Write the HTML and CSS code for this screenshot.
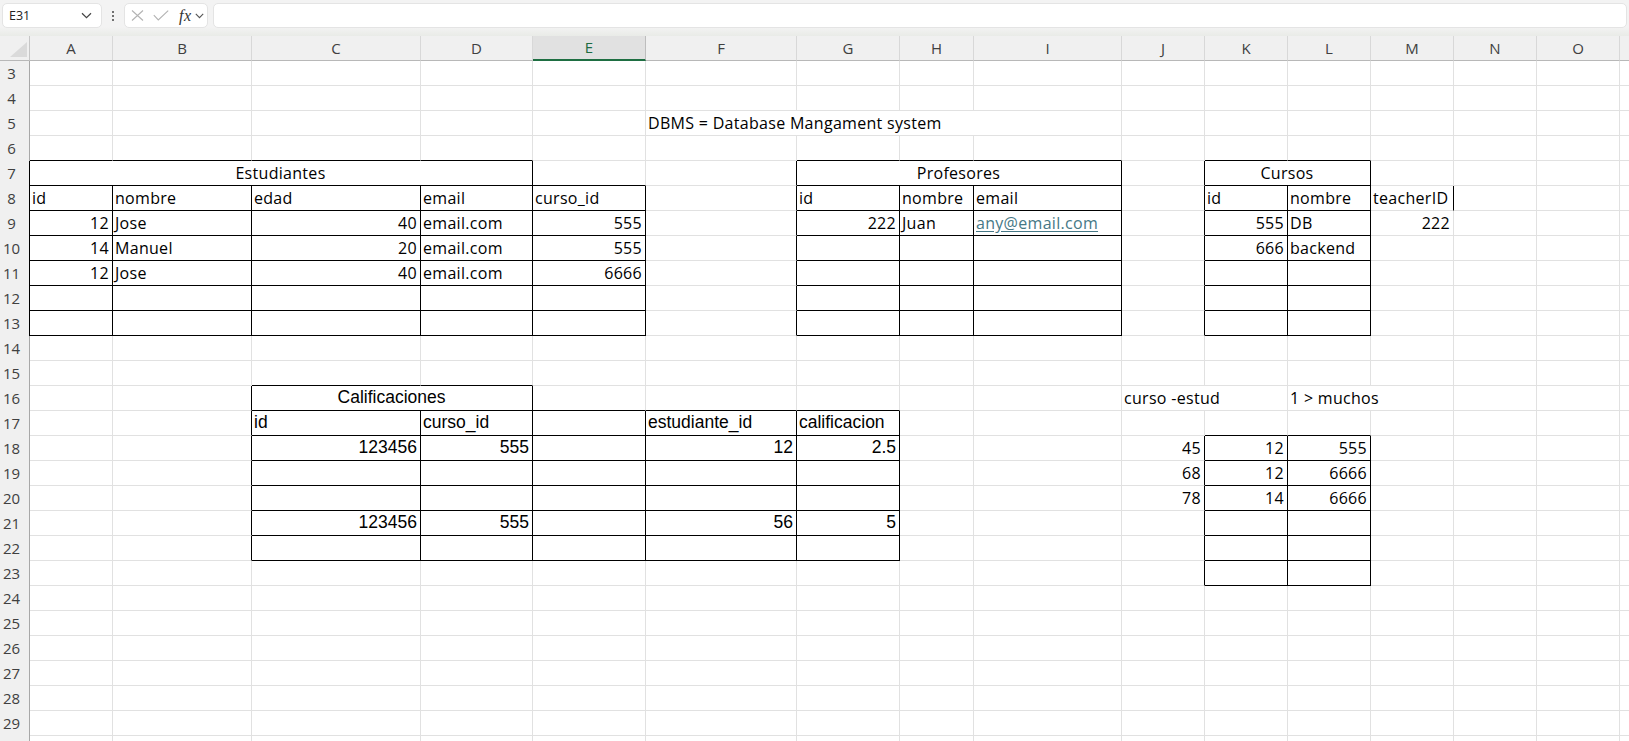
FILE: index.html
```html
<!DOCTYPE html>
<html lang="es">
<head>
<meta charset="utf-8">
<title>Excel</title>
<link rel="stylesheet" href="styles.css">
</head>
<body>
<div class="app">
  <div class="topbar">
    <div class="namebox"><span>E31</span>
      <svg class="chev" width="11" height="7" viewBox="0 0 11 7"><path d="M1 1.2 L5.5 5.6 L10 1.2" fill="none" stroke="#444" stroke-width="1.2"/></svg>
    </div>
    <div class="dots"><span></span><span></span><span></span></div>
    <div class="fxbox">
      <svg class="ico" width="13" height="11" viewBox="0 0 13 11"><path d="M1 0.5 L12 10.5 M12 0.5 L1 10.5" stroke="#b3b3b3" stroke-width="1.1" fill="none"/></svg>
      <svg class="ico" width="16" height="11" viewBox="0 0 16 11"><path d="M0.8 5.2 L5.3 10 L15.2 0.6" stroke="#b3b3b3" stroke-width="1.1" fill="none"/></svg>
      <span class="fx">fx</span>
      <svg class="chev2" width="9" height="6" viewBox="0 0 9 6"><path d="M0.8 0.8 L4.5 4.6 L8.2 0.8" fill="none" stroke="#555" stroke-width="1.1"/></svg>
    </div>
    <div class="formula"></div>
  </div>

  <div class="sheet">
    <div class="row head">
      <div class="corner"><svg width="17" height="15" viewBox="0 0 17 15"><path d="M17 0 L17 15 L0 15 Z" fill="#dadada"/></svg></div>
      <div class="h">A</div><div class="h">B</div><div class="h">C</div><div class="h">D</div>
      <div class="h sel">E</div><div class="h">F</div><div class="h">G</div><div class="h">H</div>
      <div class="h">I</div><div class="h">J</div><div class="h">K</div><div class="h">L</div>
      <div class="h">M</div><div class="h">N</div><div class="h">O</div><div class="h"></div>
    </div>

    <!-- 3 -->
    <div class="row">
      <div class="rh">3</div>
      <div class="c"></div><div class="c"></div><div class="c"></div><div class="c"></div><div class="c"></div><div class="c"></div><div class="c"></div><div class="c"></div>
      <div class="c"></div><div class="c"></div><div class="c"></div><div class="c"></div><div class="c"></div><div class="c"></div><div class="c"></div><div class="c"></div>
    </div>
    <!-- 4 -->
    <div class="row">
      <div class="rh">4</div>
      <div class="c"></div><div class="c"></div><div class="c"></div><div class="c"></div><div class="c"></div><div class="c"></div><div class="c"></div><div class="c"></div>
      <div class="c"></div><div class="c"></div><div class="c"></div><div class="c"></div><div class="c"></div><div class="c"></div><div class="c"></div><div class="c"></div>
    </div>
    <!-- 5 -->
    <div class="row">
      <div class="rh">5</div>
      <div class="c"></div><div class="c"></div><div class="c"></div><div class="c"></div><div class="c"></div>
      <div class="c s4">DBMS = Database Mangament system</div>
      <div class="c"></div><div class="c"></div><div class="c"></div><div class="c"></div><div class="c"></div><div class="c"></div><div class="c"></div>
    </div>
    <!-- 6 -->
    <div class="row">
      <div class="rh">6</div>
      <div class="c bb"></div><div class="c bb"></div><div class="c bb"></div><div class="c bb"></div><div class="c"></div><div class="c"></div>
      <div class="c bb"></div><div class="c bb"></div><div class="c bb"></div><div class="c"></div>
      <div class="c bb"></div><div class="c bb"></div>
      <div class="c"></div><div class="c"></div><div class="c"></div><div class="c"></div>
    </div>
    <!-- 7 -->
    <div class="row">
      <div class="rh bl">7</div>
      <div class="c s4 ctr br bb">Estudiantes</div>
      <div class="c bb"></div><div class="c br"></div>
      <div class="c s3 ctr br bb">Profesores</div>
      <div class="c br"></div>
      <div class="c s2 ctr br bb">Cursos</div>
      <div class="c"></div><div class="c"></div><div class="c"></div><div class="c"></div>
    </div>
    <!-- 8 -->
    <div class="row">
      <div class="rh bl">8</div>
      <div class="c br bb">id</div><div class="c br bb">nombre</div><div class="c br bb">edad</div><div class="c br bb">email</div><div class="c br bb">curso_id</div>
      <div class="c br"></div>
      <div class="c br bb">id</div><div class="c br bb">nombre</div><div class="c br bb">email</div>
      <div class="c br"></div>
      <div class="c br bb">id</div><div class="c br bb">nombre</div><div class="c br">teacherID</div>
      <div class="c"></div><div class="c"></div><div class="c"></div>
    </div>
    <!-- 9 -->
    <div class="row">
      <div class="rh bl">9</div>
      <div class="c br bb n">12</div><div class="c br bb">Jose</div><div class="c br bb n">40</div><div class="c br bb">email.com</div><div class="c br bb n">555</div>
      <div class="c br"></div>
      <div class="c br bb n">222</div><div class="c br bb">Juan</div><div class="c br bb"><span class="link">any@email.com</span></div>
      <div class="c br"></div>
      <div class="c br bb n">555</div><div class="c br bb">DB</div><div class="c n">222</div>
      <div class="c"></div><div class="c"></div><div class="c"></div>
    </div>
    <!-- 10 -->
    <div class="row">
      <div class="rh bl">10</div>
      <div class="c br bb n">14</div><div class="c br bb">Manuel</div><div class="c br bb n">20</div><div class="c br bb">email.com</div><div class="c br bb n">555</div>
      <div class="c br"></div>
      <div class="c br bb"></div><div class="c br bb"></div><div class="c br bb"></div>
      <div class="c br"></div>
      <div class="c br bb n">666</div><div class="c br bb">backend</div><div class="c"></div>
      <div class="c"></div><div class="c"></div><div class="c"></div>
    </div>
    <!-- 11 -->
    <div class="row">
      <div class="rh bl">11</div>
      <div class="c br bb n">12</div><div class="c br bb">Jose</div><div class="c br bb n">40</div><div class="c br bb">email.com</div><div class="c br bb n">6666</div>
      <div class="c br"></div>
      <div class="c br bb"></div><div class="c br bb"></div><div class="c br bb"></div>
      <div class="c br"></div>
      <div class="c br bb"></div><div class="c br bb"></div><div class="c"></div>
      <div class="c"></div><div class="c"></div><div class="c"></div>
    </div>
    <!-- 12 -->
    <div class="row">
      <div class="rh bl">12</div>
      <div class="c br bb"></div><div class="c br bb"></div><div class="c br bb"></div><div class="c br bb"></div><div class="c br bb"></div>
      <div class="c br"></div>
      <div class="c br bb"></div><div class="c br bb"></div><div class="c br bb"></div>
      <div class="c br"></div>
      <div class="c br bb"></div><div class="c br bb"></div><div class="c"></div>
      <div class="c"></div><div class="c"></div><div class="c"></div>
    </div>
    <!-- 13 -->
    <div class="row">
      <div class="rh bl">13</div>
      <div class="c br bb"></div><div class="c br bb"></div><div class="c br bb"></div><div class="c br bb"></div><div class="c br bb"></div>
      <div class="c br"></div>
      <div class="c br bb"></div><div class="c br bb"></div><div class="c br bb"></div>
      <div class="c br"></div>
      <div class="c br bb"></div><div class="c br bb"></div><div class="c"></div>
      <div class="c"></div><div class="c"></div><div class="c"></div>
    </div>
    <!-- 14 -->
    <div class="row">
      <div class="rh">14</div>
      <div class="c"></div><div class="c"></div><div class="c"></div><div class="c"></div><div class="c"></div><div class="c"></div><div class="c"></div><div class="c"></div>
      <div class="c"></div><div class="c"></div><div class="c"></div><div class="c"></div><div class="c"></div><div class="c"></div><div class="c"></div><div class="c"></div>
    </div>
    <!-- 15 -->
    <div class="row">
      <div class="rh">15</div>
      <div class="c"></div><div class="c"></div><div class="c bb"></div><div class="c bb"></div><div class="c"></div><div class="c"></div><div class="c"></div><div class="c"></div>
      <div class="c"></div><div class="c"></div><div class="c"></div><div class="c"></div><div class="c"></div><div class="c"></div><div class="c"></div><div class="c"></div>
    </div>
    <!-- 16 -->
    <div class="row">
      <div class="rh">16</div>
      <div class="c"></div><div class="c br"></div>
      <div class="c s2 ctr br bb nar">Calificaciones</div>
      <div class="c bb"></div><div class="c bb"></div><div class="c bb"></div>
      <div class="c"></div><div class="c"></div>
      <div class="c s2">curso -estud</div>
      <div class="c s2">1 &gt; muchos</div>
      <div class="c"></div><div class="c"></div><div class="c"></div>
    </div>
    <!-- 17 -->
    <div class="row">
      <div class="rh">17</div>
      <div class="c"></div><div class="c br"></div>
      <div class="c br bb nar">id</div><div class="c br bb nar">curso_id</div><div class="c br bb"></div><div class="c br bb nar">estudiante_id</div><div class="c br bb nar">calificacion</div>
      <div class="c"></div><div class="c"></div><div class="c"></div>
      <div class="c bb"></div><div class="c bb"></div>
      <div class="c"></div><div class="c"></div><div class="c"></div><div class="c"></div>
    </div>
    <!-- 18 -->
    <div class="row">
      <div class="rh">18</div>
      <div class="c"></div><div class="c br"></div>
      <div class="c br bb n nar">123456</div><div class="c br bb n nar">555</div><div class="c br bb"></div><div class="c br bb n nar">12</div><div class="c br bb n nar">2.5</div>
      <div class="c"></div><div class="c"></div>
      <div class="c br n">45</div><div class="c br bb n">12</div><div class="c br bb n">555</div>
      <div class="c"></div><div class="c"></div><div class="c"></div><div class="c"></div>
    </div>
    <!-- 19 -->
    <div class="row">
      <div class="rh">19</div>
      <div class="c"></div><div class="c br"></div>
      <div class="c br bb"></div><div class="c br bb"></div><div class="c br bb"></div><div class="c br bb"></div><div class="c br bb"></div>
      <div class="c"></div><div class="c"></div>
      <div class="c br n">68</div><div class="c br bb n">12</div><div class="c br bb n">6666</div>
      <div class="c"></div><div class="c"></div><div class="c"></div><div class="c"></div>
    </div>
    <!-- 20 -->
    <div class="row">
      <div class="rh">20</div>
      <div class="c"></div><div class="c br"></div>
      <div class="c br bb"></div><div class="c br bb"></div><div class="c br bb"></div><div class="c br bb"></div><div class="c br bb"></div>
      <div class="c"></div><div class="c"></div>
      <div class="c br n">78</div><div class="c br bb n">14</div><div class="c br bb n">6666</div>
      <div class="c"></div><div class="c"></div><div class="c"></div><div class="c"></div>
    </div>
    <!-- 21 -->
    <div class="row">
      <div class="rh">21</div>
      <div class="c"></div><div class="c br"></div>
      <div class="c br bb n nar">123456</div><div class="c br bb n nar">555</div><div class="c br bb"></div><div class="c br bb n nar">56</div><div class="c br bb n nar">5</div>
      <div class="c"></div><div class="c"></div>
      <div class="c br"></div><div class="c br bb"></div><div class="c br bb"></div>
      <div class="c"></div><div class="c"></div><div class="c"></div><div class="c"></div>
    </div>
    <!-- 22 -->
    <div class="row">
      <div class="rh">22</div>
      <div class="c"></div><div class="c br"></div>
      <div class="c br bb"></div><div class="c br bb"></div><div class="c br bb"></div><div class="c br bb"></div><div class="c br bb"></div>
      <div class="c"></div><div class="c"></div>
      <div class="c br"></div><div class="c br bb"></div><div class="c br bb"></div>
      <div class="c"></div><div class="c"></div><div class="c"></div><div class="c"></div>
    </div>
    <!-- 23 -->
    <div class="row">
      <div class="rh">23</div>
      <div class="c"></div><div class="c"></div><div class="c"></div><div class="c"></div><div class="c"></div><div class="c"></div><div class="c"></div><div class="c"></div>
      <div class="c"></div><div class="c br"></div><div class="c br bb"></div><div class="c br bb"></div><div class="c"></div><div class="c"></div><div class="c"></div><div class="c"></div>
    </div>
    <!-- 24 -->
    <div class="row">
      <div class="rh">24</div>
      <div class="c"></div><div class="c"></div><div class="c"></div><div class="c"></div><div class="c"></div><div class="c"></div><div class="c"></div><div class="c"></div>
      <div class="c"></div><div class="c"></div><div class="c"></div><div class="c"></div><div class="c"></div><div class="c"></div><div class="c"></div><div class="c"></div>
    </div>
    <!-- 25 -->
    <div class="row">
      <div class="rh">25</div>
      <div class="c"></div><div class="c"></div><div class="c"></div><div class="c"></div><div class="c"></div><div class="c"></div><div class="c"></div><div class="c"></div>
      <div class="c"></div><div class="c"></div><div class="c"></div><div class="c"></div><div class="c"></div><div class="c"></div><div class="c"></div><div class="c"></div>
    </div>
    <!-- 26 -->
    <div class="row">
      <div class="rh">26</div>
      <div class="c"></div><div class="c"></div><div class="c"></div><div class="c"></div><div class="c"></div><div class="c"></div><div class="c"></div><div class="c"></div>
      <div class="c"></div><div class="c"></div><div class="c"></div><div class="c"></div><div class="c"></div><div class="c"></div><div class="c"></div><div class="c"></div>
    </div>
    <!-- 27 -->
    <div class="row">
      <div class="rh">27</div>
      <div class="c"></div><div class="c"></div><div class="c"></div><div class="c"></div><div class="c"></div><div class="c"></div><div class="c"></div><div class="c"></div>
      <div class="c"></div><div class="c"></div><div class="c"></div><div class="c"></div><div class="c"></div><div class="c"></div><div class="c"></div><div class="c"></div>
    </div>
    <!-- 28 -->
    <div class="row">
      <div class="rh">28</div>
      <div class="c"></div><div class="c"></div><div class="c"></div><div class="c"></div><div class="c"></div><div class="c"></div><div class="c"></div><div class="c"></div>
      <div class="c"></div><div class="c"></div><div class="c"></div><div class="c"></div><div class="c"></div><div class="c"></div><div class="c"></div><div class="c"></div>
    </div>
    <!-- 29 -->
    <div class="row">
      <div class="rh">29</div>
      <div class="c"></div><div class="c"></div><div class="c"></div><div class="c"></div><div class="c"></div><div class="c"></div><div class="c"></div><div class="c"></div>
      <div class="c"></div><div class="c"></div><div class="c"></div><div class="c"></div><div class="c"></div><div class="c"></div><div class="c"></div><div class="c"></div>
    </div>
    <!-- 30 (only its top edge is in view) -->
    <div class="row">
      <div class="rh"></div>
      <div class="c"></div><div class="c"></div><div class="c"></div><div class="c"></div><div class="c"></div><div class="c"></div><div class="c"></div><div class="c"></div>
      <div class="c"></div><div class="c"></div><div class="c"></div><div class="c"></div><div class="c"></div><div class="c"></div><div class="c"></div><div class="c"></div>
    </div>
  </div>
</div>
</body>
</html>
```

FILE: styles.css
```css
* { box-sizing: border-box; }

html, body {
  margin: 0;
  padding: 0;
  background: #ffffff;
}

body {
  font-family: "Open Sans", "Liberation Sans", sans-serif;
  color: #000;
  overflow: hidden;
}

.app {
  width: 1629px;
  height: 741px;
  overflow: hidden;
}

/* ---------- formula bar ---------- */
.topbar {
  height: 36px;
  display: flex;
  align-items: flex-start;
  padding: 3px 2px 0 2px;
  background: linear-gradient(#f3f3f3 0, #f3f3f3 27px, #e9ebe7 36px);
}

.namebox {
  width: 100px;
  height: 25px;
  background: #fff;
  border: 1px solid #e4e4e4;
  border-radius: 5px;
  display: flex;
  align-items: center;
  justify-content: space-between;
  padding: 0 9px 0 6px;
  font-size: 12.5px;
  color: #222;
}

.dots {
  width: 22px;
  height: 25px;
  display: flex;
  flex-direction: column;
  align-items: center;
  justify-content: center;
  gap: 2px;
}

.dots span {
  width: 2px;
  height: 2px;
  background: #444;
  border-radius: 1px;
}

.fxbox {
  width: 84px;
  height: 25px;
  background: #fff;
  border: 1px solid #e4e4e4;
  border-radius: 5px;
  display: flex;
  align-items: center;
  padding: 0 3px 0 6px;
  gap: 9px;
}

.fxbox .ico { flex: none; }

.fx {
  font-family: "Liberation Serif", "DejaVu Serif", serif;
  font-style: italic;
  font-size: 16px;
  color: #333;
  margin-left: 1px;
  letter-spacing: 0.5px;
}

.chev2 { margin-left: -6px; }

.formula {
  flex: 1;
  height: 25px;
  margin-left: 5px;
  background: #fff;
  border: 1px solid #e4e4e4;
  border-radius: 5px;
}

/* ---------- sheet ---------- */
.sheet {
  --cols: 30px 83px 139px 169px 112px 113px 151px 103px 74px 148px 83px 83px 83px 83px 83px 83px 83px;
}

.row {
  display: grid;
  grid-template-columns: var(--cols);
  height: 25px;
}

.head .corner {
  background: #f0f0f0;
  border-right: 1px solid #c6c6c6;
  border-bottom: 1px solid #b8b8b8;
  display: flex;
  align-items: flex-end;
  justify-content: flex-end;
  padding: 0 2px 3px 0;
}

.h {
  background: #f0f0f0;
  border-right: 1px solid #d8d8d8;
  border-bottom: 1px solid #b8b8b8;
  text-align: center;
  font-size: 15px;
  line-height: 24px;
  color: #404040;
}

.h.sel {
  background: #e1e1e1;
  color: #1d6c41;
  border-bottom: 2px solid #1e6e42;
  border-right-color: #bdbdbd;
  line-height: 23px;
}

.rh {
  background: #f0f0f0;
  border-right: 1px solid #a8a8a8;
  font-size: 15px;
  line-height: 24px;
  color: #404040;
  text-align: center;
  padding-right: 6px;
}

.rh.bl { border-right-color: #000; }

.c {
  border-right: 1px solid #e1e1e1;
  border-bottom: 1px solid #e1e1e1;
  font-size: 16px;
  line-height: 24px;
  letter-spacing: 0.3px;
  padding: 0 3px 0 2px;
  white-space: nowrap;
  overflow: hidden;
}

.br { border-right-color: #000; }
.bb { border-bottom-color: #000; }
.n { text-align: right; }
.ctr { text-align: center; }
.s2 { grid-column: span 2; }
.s3 { grid-column: span 3; }
.s4 { grid-column: span 4; }

.nar {
  font-family: "Liberation Sans", "Arimo", sans-serif;
  font-size: 17.5px;
  letter-spacing: 0;
  line-height: 23px;
}

.link {
  color: #467886;
  text-decoration: underline;
  text-underline-offset: 2px;
}
```
